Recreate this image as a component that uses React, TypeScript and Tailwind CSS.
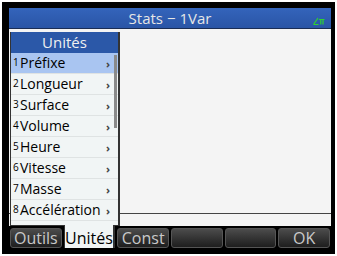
import React from "react";

const units = [
  "Préfixe",
  "Longueur",
  "Surface",
  "Volume",
  "Heure",
  "Vitesse",
  "Masse",
  "Accélération",
];

const keys = ["Outils", "Unités", "Const", "", "", "OK"];

function AngleIcon() {
  return (
    <svg width="12" height="8" viewBox="0 0 12 8" className="text-[#2fd22f]">
      <path d="M0.5 7.5 L5 1 M0.5 7.5 H5.5" stroke="currentColor" strokeWidth="1.2" fill="none" />
      <path d="M6 2.5 H11.5 M7.8 2.5 V7.5 M10 2.5 V7.5" stroke="currentColor" strokeWidth="1.2" fill="none" />
    </svg>
  );
}

function UnitsMenu() {
  return (
    <div className="absolute left-[1px] top-[3px] w-[110px] h-[194px] flex flex-col bg-[#f1f5f5] border-r-2 border-b border-l border-[#333]">
      <div className="h-[21px] shrink-0 flex items-center justify-center bg-[#2b58a8] text-[#f0f0f0] text-[15px] leading-none">
        Unités
      </div>
      <div className="relative flex flex-col">
        {units.map((u, i) => (
          <div
            key={u}
            className={`h-[21px] flex items-center pl-[2px] pr-[8px] border-b border-[#dfe3e3] ${
              i === 0 ? "bg-[#a9c5f1]" : ""
            }`}
          >
            <span className="text-[10px] leading-none -mt-[3px] w-[7px] text-black">{i + 1}</span>
            <span className="flex-1 text-[14px] leading-none text-black">{u}</span>
            <span className="text-[11px] leading-none text-[#444] font-bold">›</span>
          </div>
        ))}
        <div className="absolute right-[1px] top-[2px] w-[3px] h-[73px] bg-[#8a8a8a]" />
      </div>
    </div>
  );
}

export default function App() {
  return (
    <div className="w-[337px] h-[256px] bg-white p-[2px]" style={{ fontFamily: '"Open Sans", "DejaVu Sans", sans-serif' }}>
      <div className="w-full h-full bg-black pl-[7px] pt-[6px] pr-[4px] pb-[6px]">
        <div className="w-[322px] h-[240px] flex flex-col bg-[#f4f4f4]">
          <div className="h-[21px] shrink-0 relative flex items-center justify-center bg-gradient-to-b from-[#3464bb] to-[#2a55a6] border-b border-[#1a2d55]">
            <span className="text-[15px] leading-none text-[#e6e6e6]">Stats − 1Var</span>
            <div className="absolute right-[6px] bottom-[3px]">
              <AngleIcon />
            </div>
          </div>
          <div className="relative flex-1 flex flex-col justify-end">
            <div className="h-[13px] border-t border-[#444]" />
            <UnitsMenu />
          </div>
          <div className="h-[22px] shrink-0 grid grid-cols-6 gap-[2px] px-[1px] pt-[2px] bg-black">
            {keys.map((k, i) =>
              i === 1 ? (
                <div
                  key={i}
                  className="relative z-10 -mt-[3px] flex items-center justify-center bg-[#f1f5f5] border-l border-r-2 border-[#333] text-[16px] leading-none text-black pt-[3px]"
                >
                  {k}
                </div>
              ) : (
                <div
                  key={i}
                  className="flex items-center justify-center rounded-[3px] bg-gradient-to-b from-[#4c4c4c] to-[#1e1e1e] border border-[#555] text-[16px] leading-none text-[#c9c9c9]"
                >
                  {k}
                </div>
              )
            )}
          </div>
        </div>
      </div>
    </div>
  );
}
